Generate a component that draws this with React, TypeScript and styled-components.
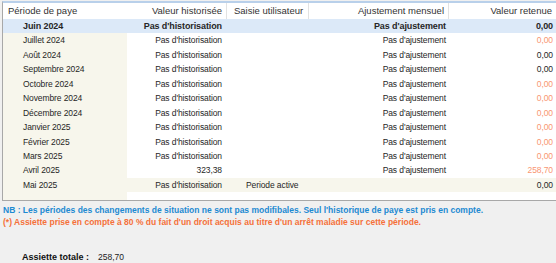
import React from 'react';
import styled, { createGlobalStyle } from 'styled-components';

const PAGE_BG = '#f0f0f0';
const BEIGE = '#f7f6ec';
const SELECTED = '#dce9f8';
const ORANGE = '#f99672';
const ROW_HEIGHT = 14.45;

type Row = {
    period: string;
    historised: string;
    userInput?: string;
    adjustment?: string;
    retained: string;
    warn?: boolean;
    selected?: boolean;
    active?: boolean;
};

const rows: Row[] = [
    { period: 'Juin 2024', historised: "Pas d'historisation", adjustment: "Pas d'ajustement", retained: '0,00', selected: true },
    { period: 'Juillet 2024', historised: "Pas d'historisation", adjustment: "Pas d'ajustement", retained: '0,00', warn: true },
    { period: 'Août 2024', historised: "Pas d'historisation", adjustment: "Pas d'ajustement", retained: '0,00' },
    { period: 'Septembre 2024', historised: "Pas d'historisation", adjustment: "Pas d'ajustement", retained: '0,00' },
    { period: 'Octobre 2024', historised: "Pas d'historisation", adjustment: "Pas d'ajustement", retained: '0,00', warn: true },
    { period: 'Novembre 2024', historised: "Pas d'historisation", adjustment: "Pas d'ajustement", retained: '0,00', warn: true },
    { period: 'Décembre 2024', historised: "Pas d'historisation", adjustment: "Pas d'ajustement", retained: '0,00', warn: true },
    { period: 'Janvier 2025', historised: "Pas d'historisation", adjustment: "Pas d'ajustement", retained: '0,00', warn: true },
    { period: 'Février 2025', historised: "Pas d'historisation", adjustment: "Pas d'ajustement", retained: '0,00', warn: true },
    { period: 'Mars 2025', historised: "Pas d'historisation", adjustment: "Pas d'ajustement", retained: '0,00', warn: true },
    { period: 'Avril 2025', historised: '323,38', adjustment: "Pas d'ajustement", retained: '258,70', warn: true },
    { period: 'Mai 2025', historised: "Pas d'historisation", userInput: 'Periode active', retained: '0,00', active: true },
];

// période | valeur historisée | saisie | ajustement | valeur retenue
const COLUMNS = '124px 99px 82px 140px 108px';

const GlobalStyle = createGlobalStyle`
    html, body {
        margin: 0;
        padding: 0;
        background: ${PAGE_BG};
        font-family: "Liberation Sans", Arial, sans-serif;
        color: #222;
    }
`;

const Page = styled.div`
    width: 556px;
    height: 263px;
    overflow: hidden;
    padding-top: 1px;
    box-sizing: border-box;
`;

const Grid = styled.div`
    margin-left: 2px;
    width: 553px;
    background: #fff;
    border-left: 1px solid #a8a8a8;
    border-right: 1px solid #a8a8a8;
    border-top: 2px solid #b9d0ea;
    border-bottom: 1px solid #a8a8a8;
`;

const HeaderRow = styled.div`
    display: grid;
    grid-template-columns: ${COLUMNS};
    height: 16px;
    background: #fff;
`;

const HeaderCell = styled.div<{ $align: 'left' | 'right'; $sep?: boolean }>`
    font-size: 9.5px;
    line-height: 16px;
    color: #333;
    white-space: nowrap;
    overflow: hidden;
    text-align: ${(p) => p.$align};
    padding: ${(p) => (p.$align === 'left' ? `0 0 0 ${p.$sep ? 7 : 5}px` : '0 4px 0 0')};
    border-left: ${(p) => (p.$sep ? '1px solid #e2e2e2' : 'none')};
`;

const Body = styled.div`
    display: grid;
    grid-template-columns: ${COLUMNS};
    grid-auto-rows: ${ROW_HEIGHT}px;
    padding-bottom: 8px;
    background: linear-gradient(to right, ${BEIGE} 124px, #fff 124px);
`;

const DataRow = styled.div<{ $selected?: boolean; $active?: boolean }>`
    display: contents;
    & > div {
        background: ${(p) => (p.$selected ? SELECTED : p.$active ? BEIGE : 'transparent')};
        font-weight: ${(p) => (p.$selected ? 'bold' : 'normal')};
        font-size: ${(p) => (p.$selected ? '9px' : '8.5px')};
        letter-spacing: -0.1px;
    }
`;

const Cell = styled.div<{ $align: 'left' | 'right'; $indent?: number }>`
    line-height: ${ROW_HEIGHT}px;
    white-space: nowrap;
    overflow: hidden;
    color: #262626;
    text-align: ${(p) => p.$align};
    padding-left: ${(p) => (p.$align === 'left' ? `${p.$indent ?? 20}px` : '0')};
    padding-right: ${(p) => (p.$align === 'right' ? '4px' : '0')};
`;

const AdjustCell = styled(Cell)`
    padding-right: 2px;
`;

const ValueCell = styled(Cell)<{ $warn?: boolean }>`
    padding-right: 3px;
    color: ${(p) => (p.$warn ? ORANGE : '#262626')};
`;

const Notes = styled.div`
    padding: 4px 0 0 3px;
    font-weight: bold;
    font-size: 8.5px;
    line-height: 11.5px;
`;

const Note = styled.div<{ $color: string }>`
    color: ${(p) => p.$color};
`;

const Total = styled.div`
    display: flex;
    align-items: baseline;
    gap: 9px;
    padding: 24px 0 0 22px;
    font-size: 9px;
`;

const TotalLabel = styled.span`
    font-weight: bold;
    color: #111;
`;

const TotalValue = styled.span`
    font-size: 8.5px;
    color: #222;
`;

export default function App() {
    return (
        <Page>
            <GlobalStyle />
            <Grid>
                <HeaderRow>
                    <HeaderCell $align="left">Période de paye</HeaderCell>
                    <HeaderCell $align="right">Valeur historisée</HeaderCell>
                    <HeaderCell $align="left" $sep>
                        Saisie utilisateur
                    </HeaderCell>
                    <HeaderCell $align="right" $sep>
                        Ajustement mensuel
                    </HeaderCell>
                    <HeaderCell $align="right" $sep>
                        Valeur retenue
                    </HeaderCell>
                </HeaderRow>
                <Body>
                    {rows.map((r) => (
                        <DataRow key={r.period} $selected={r.selected} $active={r.active}>
                            <Cell $align="left">{r.period}</Cell>
                            <Cell $align="right">{r.historised}</Cell>
                            <Cell $align="left">{r.userInput ?? ''}</Cell>
                            <AdjustCell $align="right">{r.adjustment ?? ''}</AdjustCell>
                            <ValueCell $align="right" $warn={r.warn}>
                                {r.retained}
                            </ValueCell>
                        </DataRow>
                    ))}
                </Body>
            </Grid>
            <Notes>
                <Note $color="#1d8ad2">
                    NB : Les périodes des changements de situation ne sont pas modifibales. Seul l'historique de paye est pris en compte.
                </Note>
                <Note $color="#f5703a">
                    (*) Assiette prise en compte à 80 % du fait d'un droit acquis au titre d'un arrêt maladie sur cette période.
                </Note>
            </Notes>
            <Total>
                <TotalLabel>Assiette totale :</TotalLabel>
                <TotalValue>258,70</TotalValue>
            </Total>
        </Page>
    );
}
